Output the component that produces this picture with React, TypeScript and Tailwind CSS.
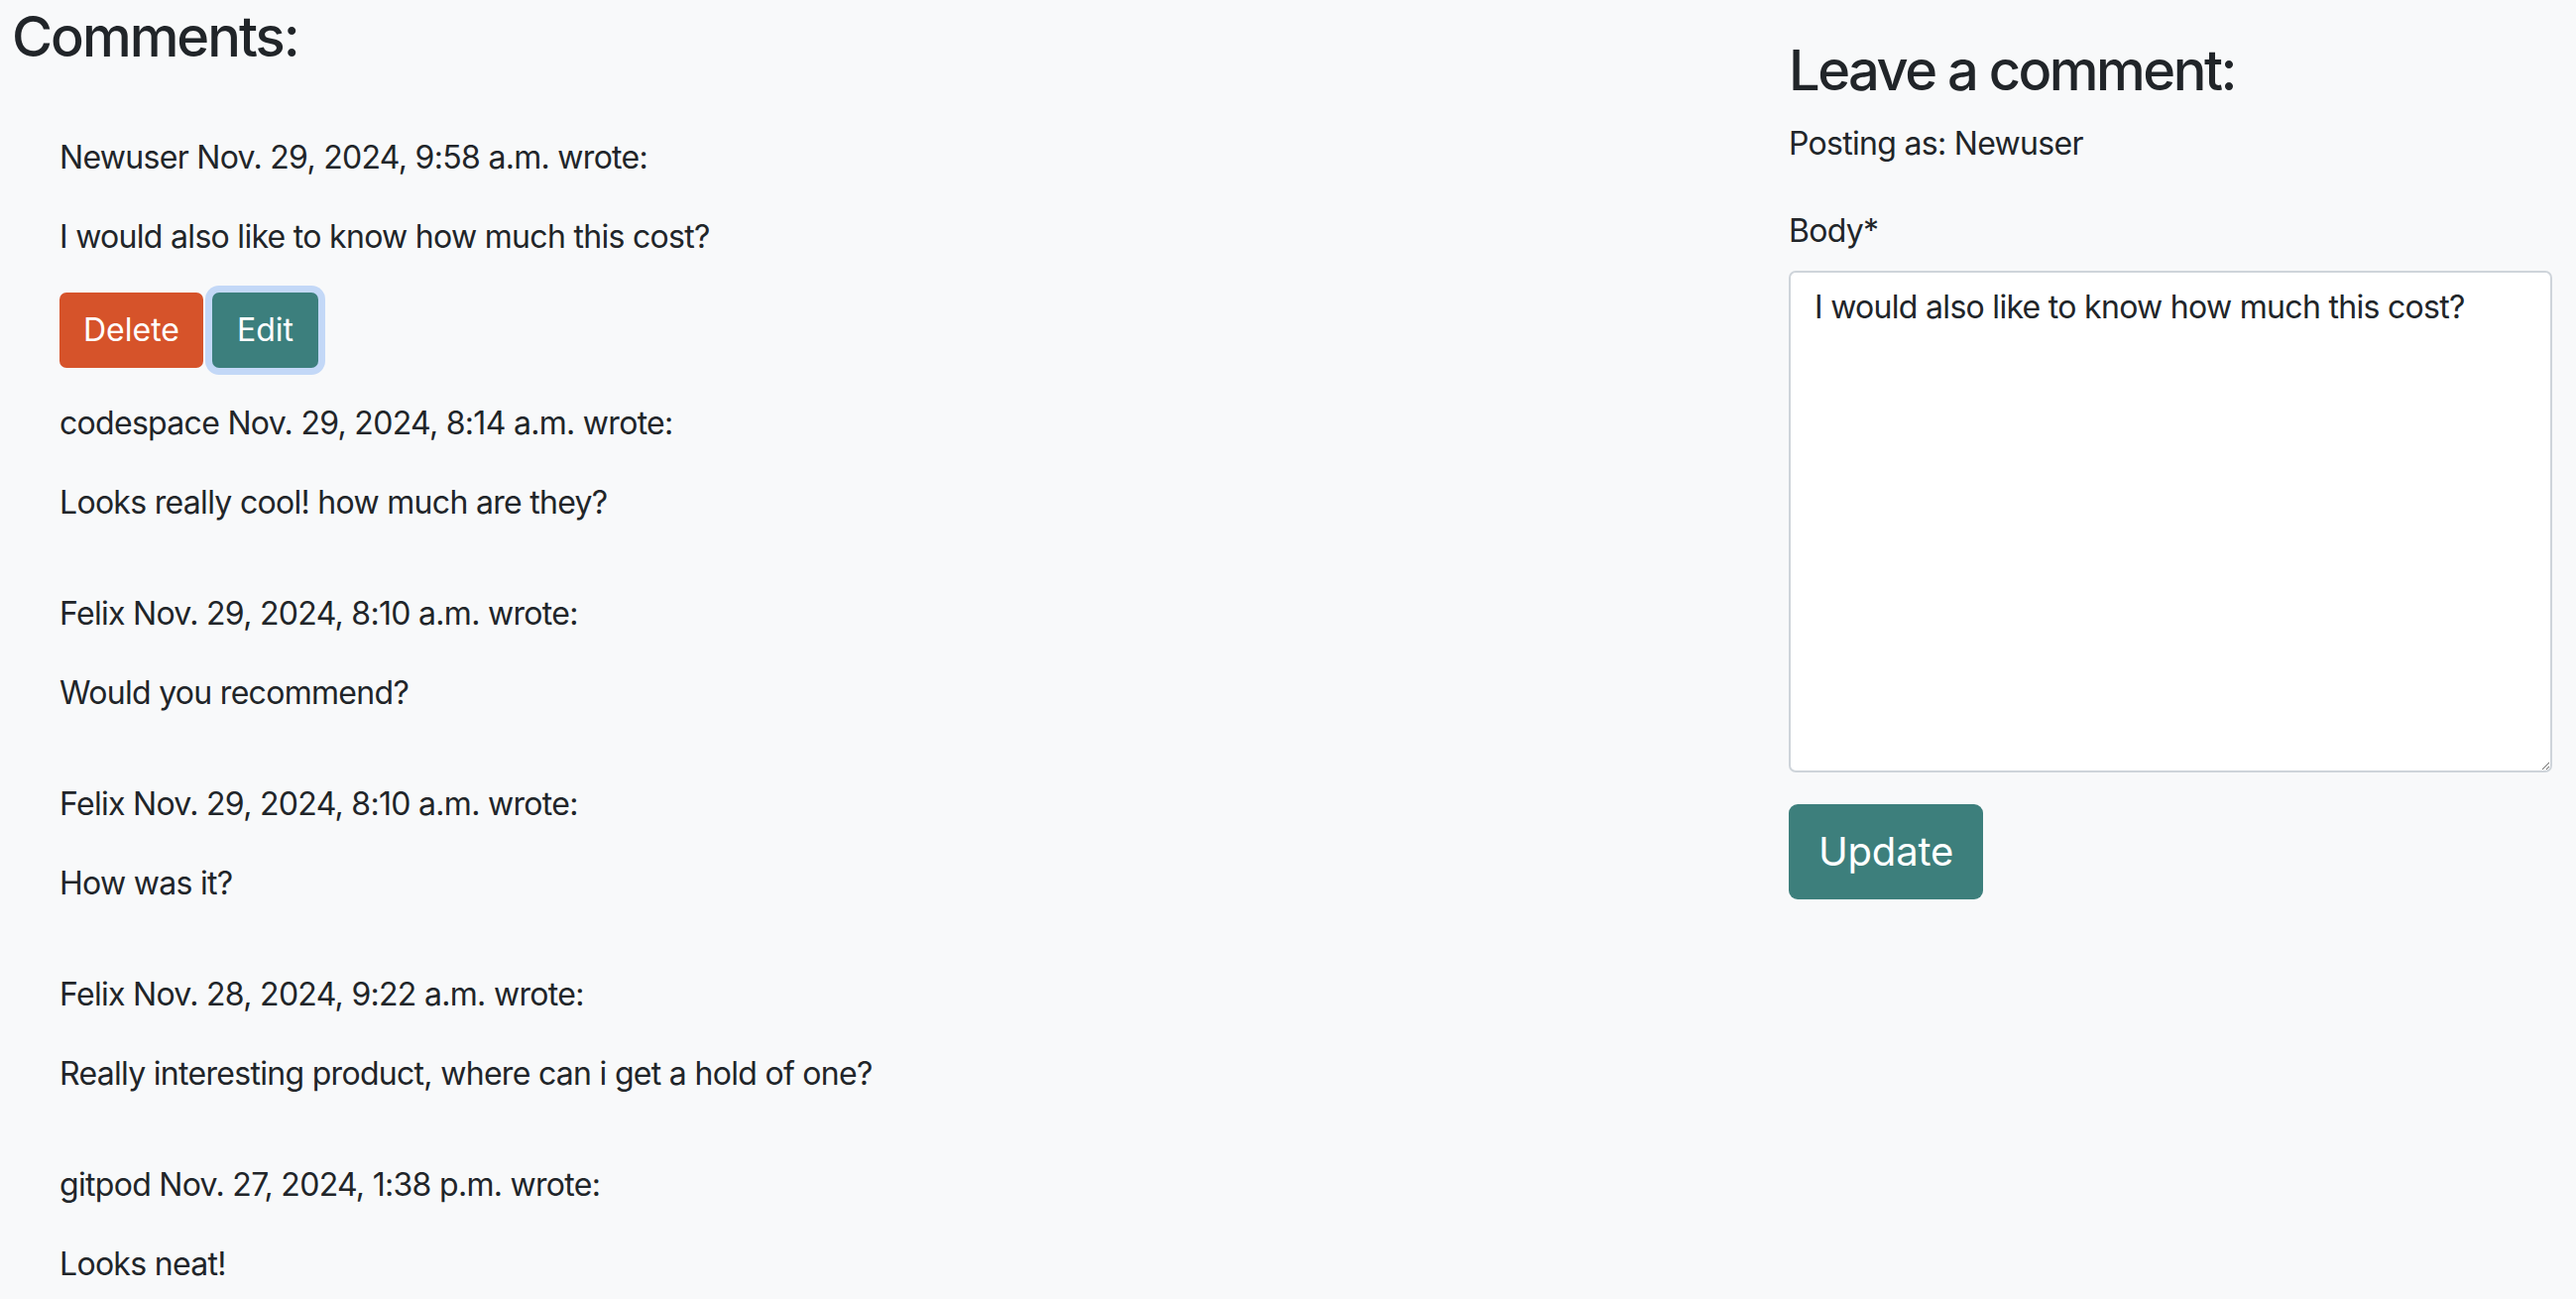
import React from 'react';

type Comment = {
    author: string;
    date: string;
    body: string;
    own?: boolean;
};

const comments: Comment[] = [
    {
        author: 'Newuser',
        date: 'Nov. 29, 2024, 9:58 a.m.',
        body: 'I would also like to know how much this cost?',
        own: true,
    },
    {
        author: 'codespace',
        date: 'Nov. 29, 2024, 8:14 a.m.',
        body: 'Looks really cool! how much are they?',
    },
    {
        author: 'Felix',
        date: 'Nov. 29, 2024, 8:10 a.m.',
        body: 'Would you recommend?',
    },
    {
        author: 'Felix',
        date: 'Nov. 29, 2024, 8:10 a.m.',
        body: 'How was it?',
    },
    {
        author: 'Felix',
        date: 'Nov. 28, 2024, 9:22 a.m.',
        body: 'Really interesting product, where can i get a hold of one?',
    },
    {
        author: 'gitpod',
        date: 'Nov. 27, 2024, 1:38 p.m.',
        body: 'Looks neat!',
    },
];

export default function App() {
    return (
        <div className="min-h-screen bg-[#f8f9fa] font-['Inter',sans-serif] text-[32px] leading-[48px] tracking-[-0.7px] text-[#212529]">
            <div className="flex">
                {/* comment list */}
                <div className="flex-1 pt-[4px] pl-[12px]">
                    <h3 className="text-[56px] leading-[67px] font-medium tracking-[-2px]">
                        Comments:
                    </h3>
                    <div className="mt-[64px] pl-[48px]">
                        {comments.map((c, i) => (
                            <div key={i} className="pb-[32px]">
                                <p className="mb-[32px]">
                                    {c.author} {c.date} wrote:
                                </p>
                                <p className="mb-[32px]">{c.body}</p>
                                {c.own && (
                                    <div className="flex gap-[9px]">
                                        <button className="h-[76px] rounded-[7px] bg-[#d6532a] px-[24px] tracking-normal text-white">
                                            Delete
                                        </button>
                                        <button className="h-[76px] rounded-[7px] bg-[#3c7f7d] px-[25px] tracking-normal text-white shadow-[0_0_0_7px_#c3d8f7]">
                                            Edit
                                        </button>
                                    </div>
                                )}
                            </div>
                        ))}
                    </div>
                </div>

                {/* comment form */}
                <div className="w-[818px] shrink-0 px-[24px] pt-[38px]">
                    <h3 className="mb-[16px] text-[56px] leading-[67px] font-medium tracking-[-2.5px]">
                        Leave a comment:
                    </h3>
                    <p className="mb-[40px]">Posting as: Newuser</p>
                    <form>
                        <label className="mb-[16px] block">Body*</label>
                        <textarea
                            className="mb-[32px] block h-[506px] w-full resize-y rounded-[7px] border-2 border-[#ced4da] bg-white px-[24px] py-[11px] text-[32px] leading-[48px] tracking-[-0.7px] text-[#212529] outline-none"
                            defaultValue="I would also like to know how much this cost?"
                        />
                        <button
                            type="button"
                            className="h-[96px] rounded-[9px] bg-[#3d7f7c] px-[30px] text-[40px] tracking-[-0.2px] text-white"
                        >
                            Update
                        </button>
                    </form>
                </div>
            </div>
        </div>
    );
}
